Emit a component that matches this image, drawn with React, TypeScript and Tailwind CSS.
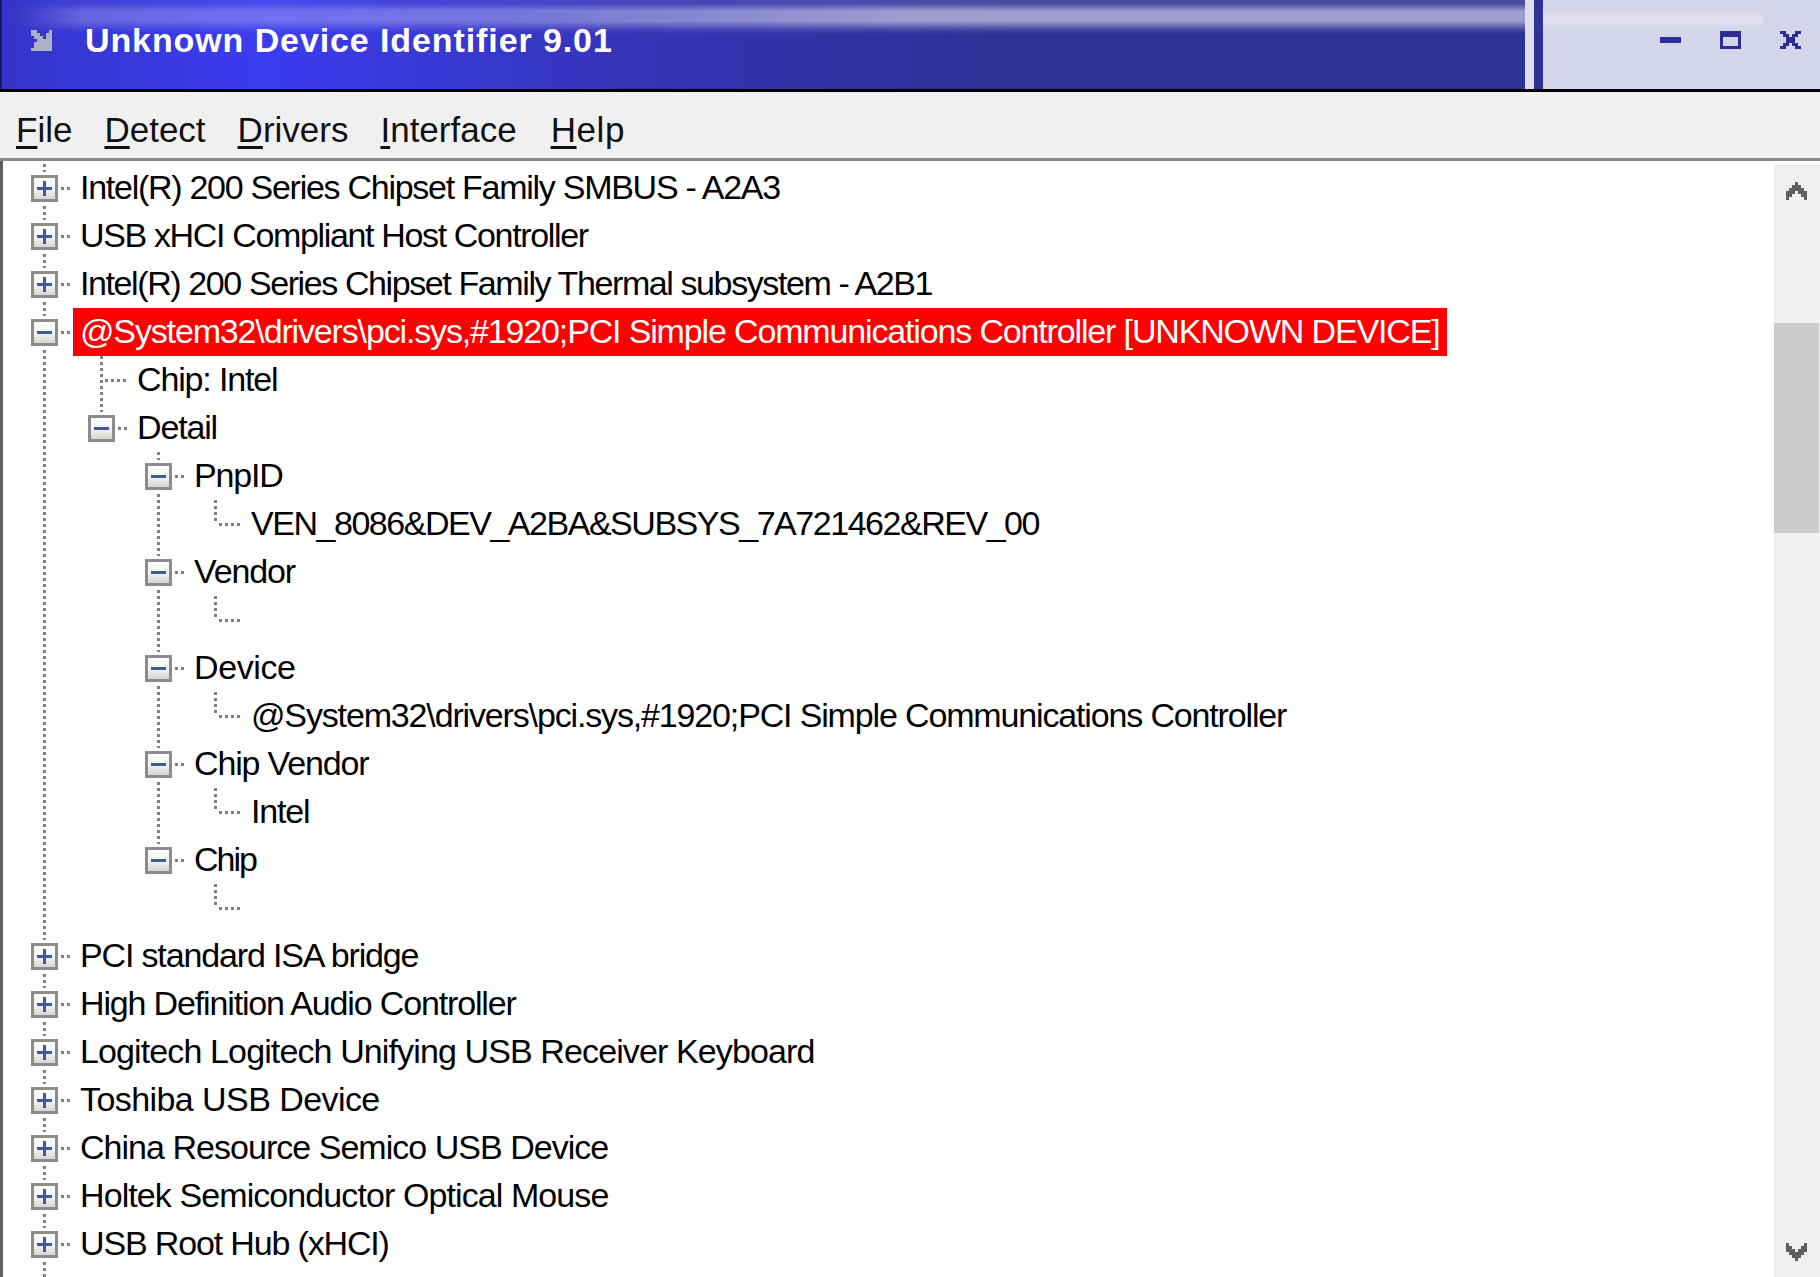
import React from 'react'

type Row = {
  level: number
  icon: 'plus' | 'minus' | 'leaf' | 'none'
  text?: string
  guides?: number[]
  more?: boolean
  selected?: boolean
  track?: string
}

const center = (level: number) => 44.5 + 57 * level

const rows: Row[] = [
  { level: 0, icon: 'plus', text: 'Intel(R) 200 Series Chipset Family SMBUS - A2A3', track: 'tracking-[-1.27px]' },
  { level: 0, icon: 'plus', text: 'USB xHCI Compliant Host Controller', track: 'tracking-[-1.35px]' },
  { level: 0, icon: 'plus', text: 'Intel(R) 200 Series Chipset Family Thermal subsystem - A2B1', track: 'tracking-[-1.4px]' },
  { level: 0, icon: 'minus', text: '@System32\\drivers\\pci.sys,#1920;PCI Simple Communications Controller [UNKNOWN DEVICE]', selected: true, track: 'tracking-[-1.15px]' },
  { level: 1, icon: 'leaf', text: 'Chip: Intel', guides: [0], more: true },
  { level: 1, icon: 'minus', text: 'Detail', guides: [0] },
  { level: 2, icon: 'minus', text: 'PnpID', guides: [0], more: true },
  { level: 3, icon: 'leaf', text: 'VEN_8086&DEV_A2BA&SUBSYS_7A721462&REV_00', guides: [0, 2], track: 'tracking-[-1.47px]' },
  { level: 2, icon: 'minus', text: 'Vendor', guides: [0], more: true },
  { level: 3, icon: 'leaf', guides: [0, 2] },
  { level: 2, icon: 'minus', text: 'Device', guides: [0], more: true, track: 'tracking-[-0.4px]' },
  { level: 3, icon: 'leaf', text: '@System32\\drivers\\pci.sys,#1920;PCI Simple Communications Controller', guides: [0, 2] },
  { level: 2, icon: 'minus', text: 'Chip Vendor', guides: [0], more: true },
  { level: 3, icon: 'leaf', text: 'Intel', guides: [0, 2] },
  { level: 2, icon: 'minus', text: 'Chip', guides: [0], track: 'tracking-[-2px]' },
  { level: 3, icon: 'leaf', guides: [0] },
  { level: 0, icon: 'plus', text: 'PCI standard ISA bridge' },
  { level: 0, icon: 'plus', text: 'High Definition Audio Controller' },
  { level: 0, icon: 'plus', text: 'Logitech Logitech Unifying USB Receiver Keyboard', track: 'tracking-[-0.88px]' },
  { level: 0, icon: 'plus', text: 'Toshiba USB Device', track: 'tracking-[-0.57px]' },
  { level: 0, icon: 'plus', text: 'China Resource Semico USB Device', track: 'tracking-[-0.97px]' },
  { level: 0, icon: 'plus', text: 'Holtek Semiconductor Optical Mouse', track: 'tracking-[-0.91px]' },
  { level: 0, icon: 'plus', text: 'USB Root Hub (xHCI)' },
  { level: 0, icon: 'none', guides: [0] },
]

const Dots = ({ x1, y1, x2, y2 }: { x1: number; y1: number; x2: number; y2: number }) => (
  <line x1={x1} y1={y1} x2={x2} y2={y2} stroke="#808080" strokeWidth={3} strokeDasharray="3 3" />
)

const TreeGutter = ({ row }: { row: Row }) => {
  const c = center(row.level)
  const width = 73 + 57 * row.level
  return (
    <svg width={width} height={48} shapeRendering="crispEdges" className="shrink-0">
      <defs>
        <linearGradient id="boxFill" x1="0" y1="0" x2="0" y2="1">
          <stop offset="0" stopColor="#ffffff" />
          <stop offset="0.55" stopColor="#f2f2f0" />
          <stop offset="1" stopColor="#d2d2cc" />
        </linearGradient>
      </defs>
      {(row.guides ?? []).map((g) => (
        <Dots key={g} x1={center(g)} y1={0} x2={center(g)} y2={48} />
      ))}
      {row.icon === 'leaf' && (
        <>
          <Dots x1={c} y1={0} x2={c} y2={row.more ? 48 : 24} />
          <Dots x1={c + 3} y1={24.5} x2={c + 27} y2={24.5} />
        </>
      )}
      {(row.icon === 'plus' || row.icon === 'minus') && (
        <>
          <Dots x1={c} y1={0} x2={c} y2={8} />
          {(row.level === 0 || row.more) && <Dots x1={c} y1={42} x2={c} y2={48} />}
          <Dots x1={c + 16} y1={24.5} x2={c + 25} y2={24.5} />
          <rect x={c - 12} y={12.5} width={24} height={24} fill="url(#boxFill)" stroke="#8c8c8c" strokeWidth={3} />
          <rect x={c - 7.5} y={23} width={15} height={3} fill="#3f5b9c" />
          {row.icon === 'plus' && <rect x={c - 1.5} y={17} width={3} height={15} fill="#3f5b9c" />}
        </>
      )}
    </svg>
  )
}

const TreeRow = ({ row }: { row: Row }) => (
  <div className="flex h-[48px] items-center">
    <TreeGutter row={row} />
    {row.text && (
      <span
        className={`h-[48px] whitespace-pre px-[7px] text-[34px] leading-[46px] ${row.track ?? 'tracking-[-1.15px]'} ${
          row.selected ? 'bg-[#ff0000] text-white' : 'text-black'
        }`}
      >
        {row.text}
      </span>
    )}
  </div>
)

const MenuItem = ({ hot, rest, className = '' }: { hot: string; rest: string; className?: string }) => (
  <span className={`text-[35px] leading-none text-[#111] ${className}`}>
    <span className="underline decoration-[3px] underline-offset-[4px]">{hot}</span>
    {rest}
  </span>
)

const pixelIcon = (grid: string[], fill: string, size = 3) => (
  <svg width={grid[0].length * size} height={grid.length * size} shapeRendering="crispEdges">
    {grid.map((line, y) =>
      line.split('').map((ch, x) =>
        ch === '#' ? <rect key={`${x}-${y}`} x={x * size} y={y * size} width={size} height={size} fill={fill} /> : null,
      ),
    )}
  </svg>
)

const appIcon = ['##....#', '###..##', '.###.##', '..#####', '.######', '.######', '#######']
const closeIcon = ['##...##', '.##.##.', '..###..', '..###..', '.##.##.', '##...##']
const maxIcon = ['#######', '#######', '#.....#', '#.....#', '#.....#', '#######']
const minIcon = ['#######', '#######']
const upIcon = ['...#...', '..###..', '.#####.', '###.###', '##...##', '#.....#']
const downIcon = ['#.....#', '##...##', '###.###', '.#####.', '..###..', '...#...']

export default function App() {
  return (
    <div className="flex h-[1277px] w-[1820px] flex-col overflow-hidden bg-white font-['Liberation_Sans',sans-serif]">
      {/* Title bar */}
      <div className="flex h-[92px] shrink-0 border-b-[3px] border-black">
        <div className="relative flex flex-1 items-center border-l-[2px] border-[#1a1a60] bg-[linear-gradient(to_right,#3434c8_0px,#3c3cf0_260px,#3434b8_620px,#2e3294_1000px,#2e3294_100%)] pb-[9px] pl-[29px]">
          <div className="pointer-events-none absolute inset-x-0 top-0 h-[34px] bg-[linear-gradient(to_bottom,rgba(255,255,255,0.12)_0px,rgba(255,255,255,0.14)_4px,rgba(255,255,255,0.52)_11px,rgba(255,255,255,0.52)_21px,rgba(255,255,255,0.14)_29px,rgba(255,255,255,0)_34px)] [mask-image:linear-gradient(to_right,transparent_10px,rgba(0,0,0,0.45)_80px,rgba(0,0,0,0.6)_500px,black_900px)]" />
          <div className="relative flex items-center">
            {pixelIcon(appIcon, '#aab2c8')}
            <span className="ml-[33px] text-[34px] font-bold leading-none tracking-[0.9px] text-white">Unknown Device Identifier 9.01</span>
          </div>
        </div>
        <div className="w-[9px] bg-[#dedef0]" />
        <div className="w-[9px] bg-[#2e3294]" />
        <div className="relative flex w-[277px] items-center justify-end gap-[39px] bg-[#d4d4ea] pb-[9px] pr-[19px]">
          <div className="pointer-events-none absolute left-0 top-[8px] h-[24px] w-[220px] rounded-r-full bg-[linear-gradient(to_bottom,rgba(255,255,255,0),rgba(255,255,255,0.35)_45%,rgba(255,255,255,0))]" />
          {pixelIcon(minIcon, '#2e2e92')}
          {pixelIcon(maxIcon, '#2e2e92')}
          {pixelIcon(closeIcon, '#2e2e92')}
        </div>
      </div>

      {/* Menu */}
      <div className="flex h-[69px] shrink-0 items-center gap-[32px] border-b-[3px] border-[#8a8a8a] bg-[#f0f0f0] pl-[16px] pt-[9px]">
        <MenuItem hot="F" rest="ile" />
        <MenuItem hot="D" rest="etect" />
        <MenuItem hot="D" rest="rivers" />
        <MenuItem hot="I" rest="nterface" />
        <MenuItem hot="H" rest="elp" className="ml-[2px] tracking-[0.6px]" />
      </div>

      {/* Tree and scrollbar */}
      <div className="flex min-h-0 flex-1 border-l-[3px] border-[#5e5e64]">
        <div className="-ml-[3px] min-w-0 flex-1 overflow-hidden pt-[3px]">
          {rows.map((row, i) => (
            <TreeRow key={i} row={row} />
          ))}
        </div>
        <div className="mt-[3px] flex w-[46px] shrink-0 flex-col bg-[#f0f0f0] pr-[1px]">
          <div className="flex h-[54px] items-center justify-center">{pixelIcon(upIcon, '#5f5f5f')}</div>
          <div className="h-[105px]" />
          <div className="h-[210px] bg-[#cccccc]" />
          <div className="flex-1" />
          <div className="flex h-[50px] items-center justify-center">{pixelIcon(downIcon, '#5f5f5f')}</div>
        </div>
      </div>
    </div>
  )
}
